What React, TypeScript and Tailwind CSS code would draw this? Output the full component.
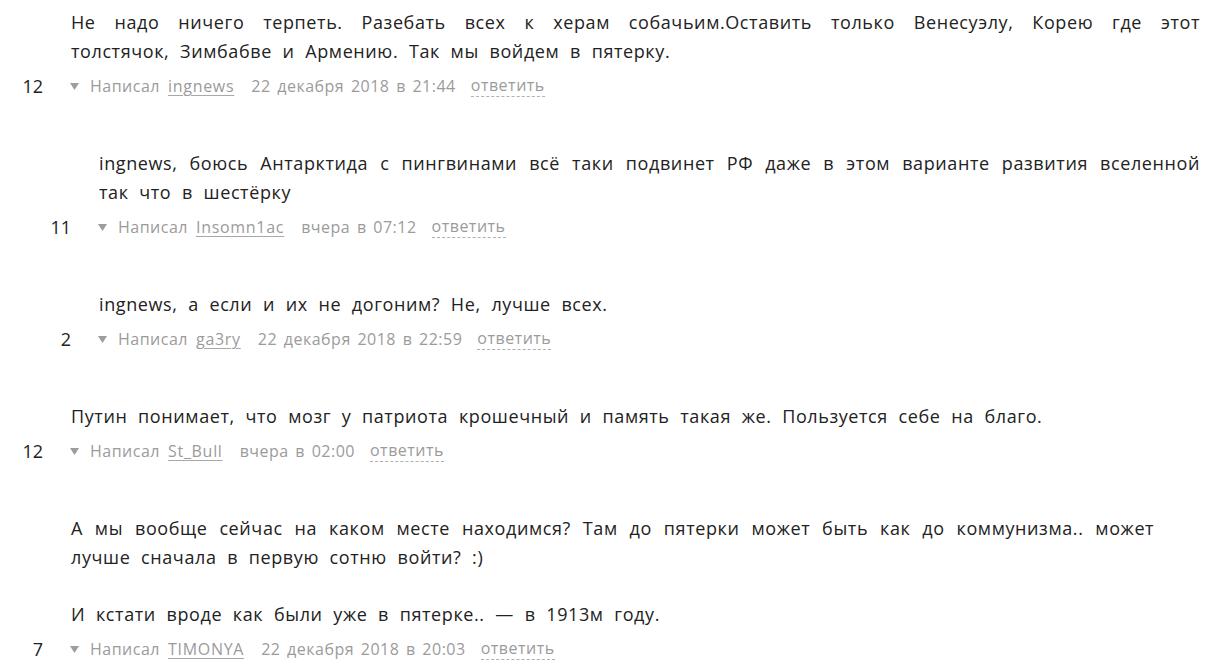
import React from "react";

type Line = { t: string; j?: boolean; wide?: boolean };
type C = {
  depth: number;
  paras: Line[][];
  score: string;
  author: string;
  date: string;
};

const comments: C[] = [
  {
    depth: 0,
    paras: [
      [
        {
          t: "Не надо ничего терпеть. Разебать всех к херам собачьим.Оставить только Венесуэлу, Корею где этот",
          j: true,
        },
        { t: "толстячок, Зимбабве и Армению. Так мы войдем в пятерку." },
      ],
    ],
    score: "12",
    author: "ingnews",
    date: "22 декабря 2018 в 21:44",
  },
  {
    depth: 1,
    paras: [
      [
        {
          t: "ingnews, боюсь Антарктида с пингвинами всё таки подвинет РФ даже в этом варианте развития вселенной",
          j: true,
        },
        { t: "так что в шестёрку" },
      ],
    ],
    score: "11",
    author: "Insomn1ac",
    date: "вчера в 07:12",
  },
  {
    depth: 1,
    paras: [[{ t: "ingnews, а если и их не догоним? Не, лучше всех." }]],
    score: "2",
    author: "ga3ry",
    date: "22 декабря 2018 в 22:59",
  },
  {
    depth: 0,
    paras: [
      [{ t: "Путин понимает, что мозг у патриота крошечный и память такая же. Пользуется себе на благо." }],
    ],
    score: "12",
    author: "St_Bull",
    date: "вчера в 02:00",
  },
  {
    depth: 0,
    paras: [
      [
        {
          t: "А мы вообще сейчас на каком месте находимся? Там до пятерки может быть как до коммунизма.. может",
          wide: true,
        },
        { t: "лучше сначала в первую сотню войти? :)" },
      ],
      [{ t: "И кстати вроде как были уже в пятерке.. — в 1913м году." }],
    ],
    score: "7",
    author: "TIMONYA",
    date: "22 декабря 2018 в 20:03",
  },
];

function Triangle() {
  return (
    <svg width="9" height="7" viewBox="0 0 9 7" className="ml-[27px] shrink-0">
      <path d="M0 0 H9 L4.5 7 Z" fill="#9d9d9d" />
    </svg>
  );
}

function lineClass(l: Line) {
  if (l.j) return "block text-justify [text-align-last:justify]";
  if (l.wide) return "block whitespace-nowrap [word-spacing:6.6px]";
  return "block whitespace-nowrap";
}

function Comment({ c }: { c: C }) {
  return (
    <div className={c.depth ? "ml-[28px]" : ""}>
      <div className="pl-[71px] pr-[14px] text-[18px] leading-[29px] text-[#222] tracking-[0.6px] [word-spacing:5.4px]">
        {c.paras.map((p, i) => (
          <p key={i} className={i > 0 ? "mt-[28px]" : ""}>
            {p.map((l, j) => (
              <span key={j} className={lineClass(l)}>
                {l.t}
              </span>
            ))}
          </p>
        ))}
      </div>
      <div className="mt-[8px] flex items-center h-[24px] text-[16px] text-[#9b9b9b] tracking-[0.5px] [word-spacing:2px]">
        <span className="w-[43px] text-right text-[18px] text-[#222] tracking-normal">{c.score}</span>
        <Triangle />
        <span className="ml-[11px]">Написал</span>
        <span className="ml-[8px] underline underline-offset-[3px] decoration-[#a8a8a8] tracking-[0.7px]">
          {c.author}
        </span>
        <span className="ml-[17px]">{c.date}</span>
        <span className="ml-[15px] border-b border-dashed border-[#b0b0b0] leading-[21px]">ответить</span>
      </div>
    </div>
  );
}

export default function App() {
  return (
    <div
      className="bg-white w-[1214px] h-[669px] overflow-hidden pt-[8px] flex flex-col gap-[51px]"
      style={{ fontFamily: '"Open Sans", "Noto Sans", sans-serif' }}
    >
      {comments.map((c, i) => (
        <Comment key={i} c={c} />
      ))}
    </div>
  );
}
